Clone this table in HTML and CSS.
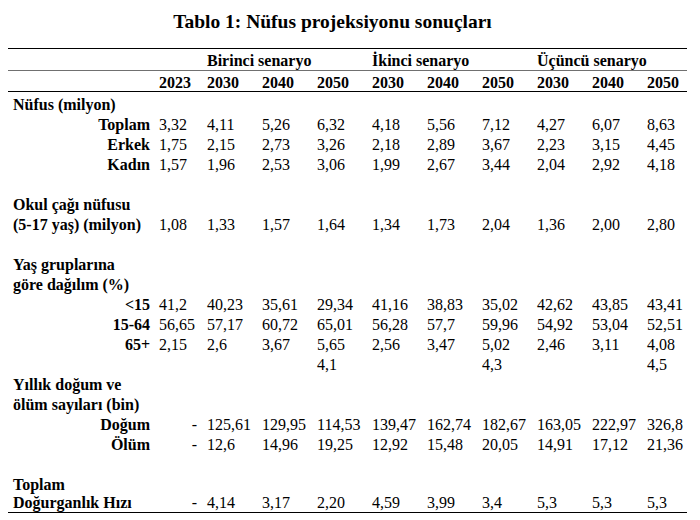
FILE: index.html
```html
<!DOCTYPE html>
<html lang="tr">
<head>
<meta charset="utf-8">
<title>Tablo 1</title>
<link rel="stylesheet" href="styles.css">
</head>
<body>
<div class="page">
  <h1 class="title">Tablo 1: Nüfus projeksiyonu sonuçları</h1>
  <table class="proj">
    <colgroup>
      <col class="c-label"><col class="c-base">
      <col class="c-n"><col class="c-n"><col class="c-n">
      <col class="c-n"><col class="c-n"><col class="c-n">
      <col class="c-n"><col class="c-n"><col class="c-last">
    </colgroup>
    <thead>
      <tr class="h1row">
        <th></th><th></th>
        <th colspan="3">Birinci senaryo</th>
        <th colspan="3">İkinci senaryo</th>
        <th colspan="3">Üçüncü senaryo</th>
      </tr>
      <tr class="h2row">
        <th></th><th>2023</th>
        <th>2030</th><th>2040</th><th>2050</th>
        <th>2030</th><th>2040</th><th>2050</th>
        <th>2030</th><th>2040</th><th>2050</th>
      </tr>
    </thead>
    <tbody>
      <tr><th class="grp" colspan="11">Nüfus (milyon)</th></tr>
      <tr><th class="sub">Toplam</th><td>3,32</td><td>4,11</td><td>5,26</td><td>6,32</td><td>4,18</td><td>5,56</td><td>7,12</td><td>4,27</td><td>6,07</td><td>8,63</td></tr>
      <tr><th class="sub">Erkek</th><td>1,75</td><td>2,15</td><td>2,73</td><td>3,26</td><td>2,18</td><td>2,89</td><td>3,67</td><td>2,23</td><td>3,15</td><td>4,45</td></tr>
      <tr><th class="sub">Kadın</th><td>1,57</td><td>1,96</td><td>2,53</td><td>3,06</td><td>1,99</td><td>2,67</td><td>3,44</td><td>2,04</td><td>2,92</td><td>4,18</td></tr>
      <tr><td colspan="11"></td></tr>
      <tr><th class="grp" colspan="11">Okul çağı nüfusu</th></tr>
      <tr><th class="grp">(5-17 yaş) (milyon)</th><td>1,08</td><td>1,33</td><td>1,57</td><td>1,64</td><td>1,34</td><td>1,73</td><td>2,04</td><td>1,36</td><td>2,00</td><td>2,80</td></tr>
      <tr><td colspan="11"></td></tr>
      <tr><th class="grp" colspan="11">Yaş gruplarına</th></tr>
      <tr><th class="grp" colspan="11">göre dağılım (%)</th></tr>
      <tr><th class="sub">&lt;15</th><td>41,2</td><td>40,23</td><td>35,61</td><td>29,34</td><td>41,16</td><td>38,83</td><td>35,02</td><td>42,62</td><td>43,85</td><td>43,41</td></tr>
      <tr><th class="sub">15-64</th><td>56,65</td><td>57,17</td><td>60,72</td><td>65,01</td><td>56,28</td><td>57,7</td><td>59,96</td><td>54,92</td><td>53,04</td><td>52,51</td></tr>
      <tr><th class="sub">65+</th><td>2,15</td><td>2,6</td><td>3,67</td><td>5,65</td><td>2,56</td><td>3,47</td><td>5,02</td><td>2,46</td><td>3,11</td><td>4,08</td></tr>
      <tr><th></th><td></td><td></td><td></td><td>4,1</td><td></td><td></td><td>4,3</td><td></td><td></td><td>4,5</td></tr>
      <tr><th class="grp" colspan="11">Yıllık doğum ve</th></tr>
      <tr><th class="grp" colspan="11">ölüm sayıları (bin)</th></tr>
      <tr><th class="sub">Doğum</th><td class="dash">-</td><td>125,61</td><td>129,95</td><td>114,53</td><td>139,47</td><td>162,74</td><td>182,67</td><td>163,05</td><td>222,97</td><td>326,8</td></tr>
      <tr><th class="sub">Ölüm</th><td class="dash">-</td><td>12,6</td><td>14,96</td><td>19,25</td><td>12,92</td><td>15,48</td><td>20,05</td><td>14,91</td><td>17,12</td><td>21,36</td></tr>
      <tr><td colspan="11"></td></tr>
      <tr><th class="grp" colspan="11">Toplam</th></tr>
      <tr class="last"><th class="grp">Doğurganlık Hızı</th><td class="dash">-</td><td>4,14</td><td>3,17</td><td>2,20</td><td>4,59</td><td>3,99</td><td>3,4</td><td>5,3</td><td>5,3</td><td>5,3</td></tr>
    </tbody>
  </table>
</div>
</body>
</html>
```

FILE: styles.css
```css
html, body {
  margin: 0;
  padding: 0;
  background: #fff;
}

.page {
  padding: 8px 13px 0 8px;
  font-family: "Liberation Serif", "Times New Roman", serif;
  color: #000;
}

.title {
  margin: 0 0 12px 0;
  font-size: 19.5px;
  line-height: 28px;
  font-weight: bold;
  text-align: center;
  padding-right: 30px;
}

.proj {
  border-collapse: collapse;
  table-layout: fixed;
  width: 679px;
  font-size: 16px;
}

.c-label { width: 147px; }
.c-base { width: 48px; }
.c-n { width: 55px; }
.c-last { width: 44px; }

.proj th,
.proj td {
  padding: 6px 0 0 4px;
  height: 14px;
  line-height: 14px;
  text-align: left;
  vertical-align: top;
  white-space: nowrap;
  font-weight: normal;
}

.proj thead th {
  font-weight: bold;
  padding-top: 4px;
  line-height: 16px;
  height: 16px;
}

.h1row th {
  border-top: 1px solid #000;
  border-bottom: 1px solid #707070;
  padding-bottom: 1px;
}

.h2row th {
  border-bottom: 1px solid #000;
}

.proj tbody th.grp {
  font-weight: bold;
  padding-left: 5px;
}

.proj tbody th.sub {
  font-weight: bold;
  text-align: right;
  padding-right: 5px;
}

.proj td.dash {
  text-align: right;
  padding-right: 6px;
}

.proj .last th,
.proj .last td {
  padding-top: 4px;
  padding-bottom: 2px;
  border-bottom: 1px solid #000;
}
```
